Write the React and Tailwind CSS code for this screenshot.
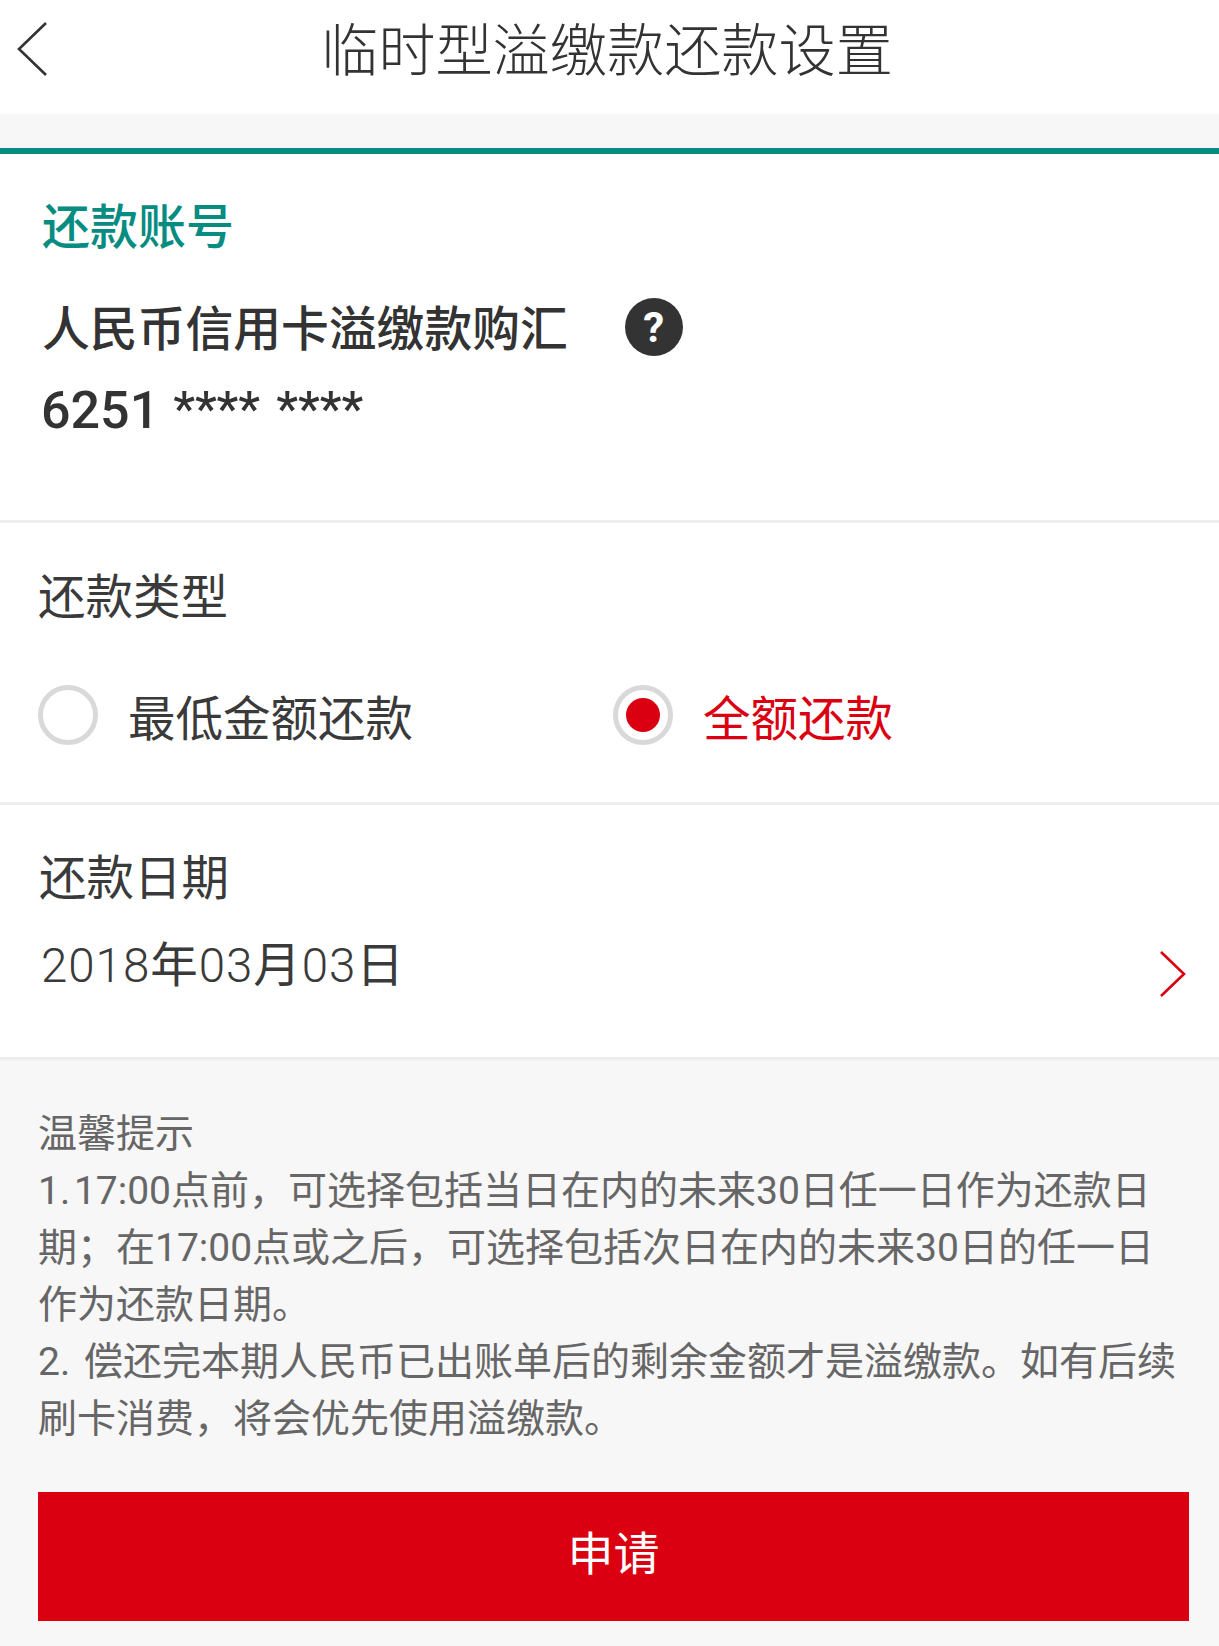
const cjk = "font-['Roboto','Noto_Sans_CJK_SC',sans-serif]";

function Radio({ checked, label }) {
  return (
    <div className="flex items-center">
      <div className="mb-[2px] flex h-[60px] w-[60px] items-center justify-center rounded-full border-[5px] border-[#d9d9d9] bg-white">
        {checked && <div className="h-[34px] w-[34px] rounded-full bg-[#da0011]" />}
      </div>
      <span
        className={`ml-[30px] mt-[9px] text-[47.5px] leading-[60px] ${
          checked ? "text-[#da0011]" : "text-[#3a3a3a]"
        }`}
      >
        {label}
      </span>
    </div>
  );
}

export default function App() {
  return (
    <div className={`${cjk} h-[1646px] w-[1219px] overflow-hidden bg-[#f7f7f7]`}>
      <header className="relative flex h-[114px] items-center justify-center bg-white">
        <svg
          className="absolute left-[15px] top-[21px]"
          width="34"
          height="56"
          viewBox="0 0 34 56"
          fill="none"
          stroke="#333"
          strokeWidth="2.6"
        >
          <path d="M31 2 L4 28 L31 54" />
        </svg>
        <h1 className="mb-[10px] ml-[-5px] text-[57.2px] font-light leading-[100px] text-[#333]">
          临时型溢缴款还款设置
        </h1>
      </header>

      <div className="mt-[34px] h-[6px] bg-[#078c82]" />

      <section className="h-[369px] border-b-[3px] border-[#eeeeee] bg-white pl-[42px] pt-[42px]">
        <h2 className="text-[48px] font-medium leading-[64px] text-[#078c82]">还款账号</h2>
        <div className="mt-[38px] flex items-center">
          <span className="text-[47.8px] font-medium leading-[64px] text-[#333]">
            人民币信用卡溢缴款购汇
          </span>
          <span className="mb-[6px] ml-[57px] flex h-[58px] w-[58px] items-center justify-center rounded-full bg-[#333] text-[42px] font-bold text-white">
            ?
          </span>
        </div>
        <div className="-ml-[1px] mt-[15px] h-[64px] text-[49px] font-medium leading-[64px] text-[#333] [word-spacing:4px]">
          <span className="text-[52px] [word-spacing:1px]">6251 </span>
          <span className="align-[3px]">**** ****</span>
        </div>
      </section>

      <section className="h-[282px] border-b-[3px] border-[#eeeeee] bg-white pl-[38px] pt-[43px]">
        <div className="text-[47.5px] leading-[64px] text-[#3a3a3a]">还款类型</div>
        <div className="mt-[51px] flex">
          <div className="w-[575px]">
            <Radio label="最低金额还款" />
          </div>
          <Radio checked label="全额还款" />
        </div>
      </section>

      <section className="flex h-[255px] items-start justify-between border-b-[3px] border-[#eeeeee] bg-white pl-[39px] pr-[32px] pt-[42px]">
        <div>
          <div className="text-[47.5px] leading-[64px] text-[#3a3a3a]">还款日期</div>
          <div className="ml-[2px] mt-[23px] text-[47.5px] leading-[64px] tracking-[0.95px] text-[#3a3a3a]">
            <span className="font-light">2018</span>年<span className="font-light">03</span>月
            <span className="font-light">03</span>日
          </div>
        </div>
        <svg
          className="mt-[104px]"
          width="28"
          height="46"
          viewBox="0 0 28 46"
          fill="none"
          stroke="#da0011"
          strokeWidth="2.6"
        >
          <path d="M2 1 L25 23 L2 45" />
        </svg>
      </section>

      <section className="px-[38px] pt-[46px] text-[39px] leading-[57px] text-[#666]">
        <p>温馨提示</p>
        <p className="[word-spacing:-6px]">
          1. 17:00点前，可选择包括当日在内的未来30日任一日作为还款日期；在17:00点或之后，可选择包括次日在内的未来30日的任一日作为还款日期。
        </p>
        <p className="[word-spacing:4px]">
          2. 偿还完本期人民币已出账单后的剩余金额才是溢缴款。如有后续刷卡消费，将会优先使用溢缴款。
        </p>
      </section>

      <div className="mt-[44px] pl-[38px] pr-[30px]">
        <button className="flex h-[129px] w-full items-center justify-center bg-[#da0011] pb-[4px] text-[46px] text-white">
          申请
        </button>
      </div>
    </div>
  );
}
